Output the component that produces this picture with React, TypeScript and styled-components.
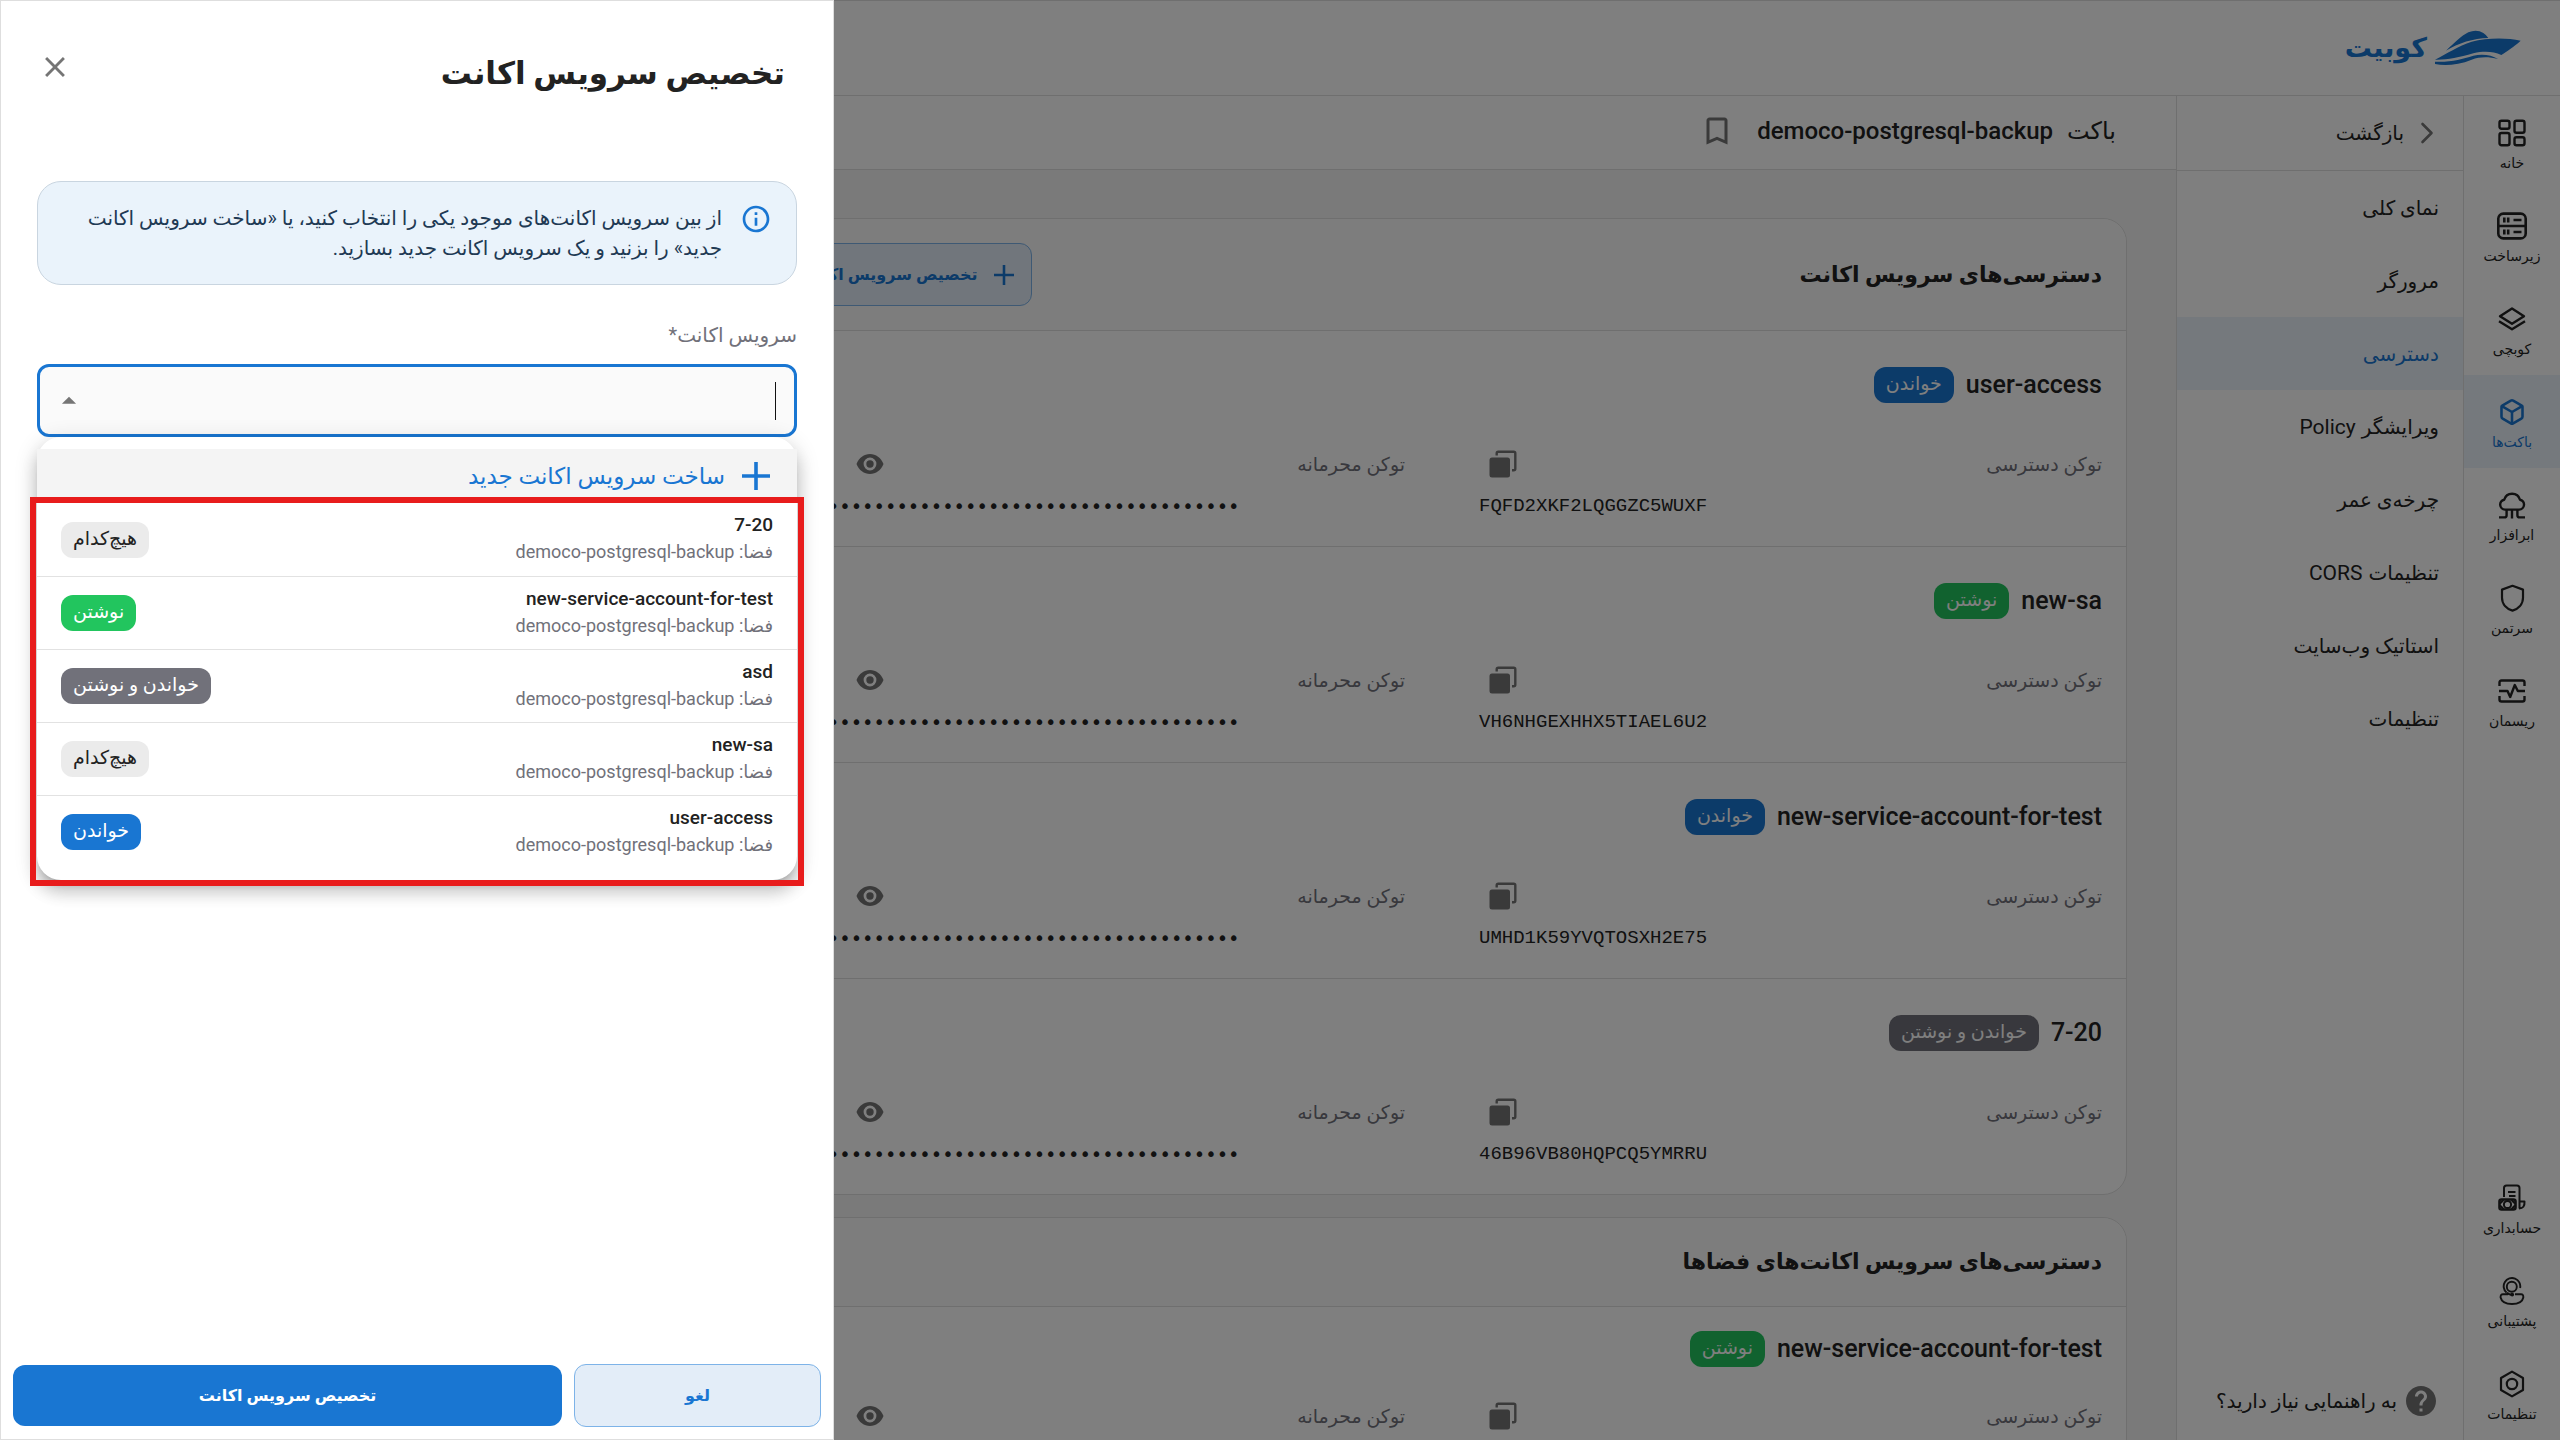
import React from "react";
import styled, { createGlobalStyle, css } from "styled-components";
import { MdBookmarkBorder, MdClose, MdHelp, MdInfoOutline, MdArrowDropUp } from "react-icons/md";
import { Box as BoxIcon } from "lucide-react";

const c = {
  blue: "#1976d2",
  green: "#22c55e",
  slate: "#71717a",
  ink: "#222222",
  muted: "#71717a",
  icon: "#757575",
  line: "#dedede",
  active: "#ebf3fa",
};

const GlobalStyle = createGlobalStyle`
  *, *::before, *::after { box-sizing: border-box; }
  html, body, #root { height: 100%; }
  body {
    margin: 0;
    direction: rtl;
    overflow: hidden;
    background: #f5f5f5;
    color: ${c.ink};
    font-family: Roboto, "DejaVu Sans", sans-serif;
    font-size: 20px;
  }
  button, input { font: inherit; color: inherit; }
  h1, h2, h3, p, ul { margin: 0; padding: 0; }
  ul { list-style: none; }
  a { color: inherit; text-decoration: none; }
  svg { display: block; flex: none; }
`;

/* ---------- icons ---------- */

const Line = styled.svg.attrs((p) => ({
  viewBox: p.viewBox ?? "0 0 28 28",
  width: p.width ?? 28,
  height: p.height ?? 28,
  strokeWidth: p.strokeWidth ?? 2.4,
  "aria-hidden": true,
}))`
  fill: none;
  stroke: currentColor;
  stroke-linejoin: round;
`;

const HomeIcon = () => (
  <Line>
    <rect x="1.5" y="1.7" width="10" height="8" rx="2" />
    <rect x="1.5" y="14" width="10" height="12.3" rx="2" />
    <rect x="16.5" y="1.7" width="10" height="12" rx="2" />
    <rect x="16.5" y="18.2" width="10" height="8.1" rx="2" />
  </Line>
);
const ServerIcon = () => (
  <Line viewBox="0 0 30 28" width="30" strokeWidth="2.6">
    <rect x="1.3" y="1.6" width="27.4" height="24.8" rx="5" />
    <path d="M1.5 14h27M7.3 5.5v5M11.2 5.5v5M7.3 17.5v5M11.2 17.5v5M16.5 8h8M16.5 20h8" />
  </Line>
);
const LayersIcon = () => (
  <Line>
    <path d="M14 3.5 26 11.2 14 18.8 2 11.2zM1 16.2l13 8 13-8" />
  </Line>
);
const CloudIcon = () => (
  <Line>
    <path d="M7 18.6a5 5 0 0 1-.8-9.9 8.2 8.2 0 0 1 15.8 0 5 5 0 0 1-.8 9.9zM1 26.4h5.4q2.2 0 2.2-2.2v-5M27 26.4h-5.4q-2.2 0-2.2-2.2v-5M14 19v8.4" />
  </Line>
);
const ShieldIcon = () => (
  <Line strokeWidth="2.2">
    <path d="M14.5 1.8 25 5.6v8.2c0 6.4-4.6 11-10.5 12.8C8.6 24.8 4 20.2 4 13.8V5.6z" />
  </Line>
);
const MonitorIcon = () => (
  <Line>
    <path d="M1.5 9V5.5q0-2 2-2h21q2 0 2 2V9M1.5 19v3.5q0 2 2 2h21q2 0 2-2V19M1 14h8.5l2.7 6 4.6-12 3 6H27" />
  </Line>
);
const BillingIcon = () => (
  <Line strokeWidth="2">
    <path d="M6 13V4q0-2.5 2.5-2.5h10.5q2.5 0 2.5 2.5v20.5M21.5 17.5h5q.5 7-5.5 7M10 8h7.5M11 12h6.5" />
    <rect x="1.5" y="15.5" width="16" height="10" rx="2" strokeWidth="2.6" />
    <circle cx="9.5" cy="20.5" r="3.6" />
    <path d="M2 19.5l3.5-3.5M17 19.5l-3.5-3.5M2 21.5l3.5 3.5M17 21.5l-3.5 3.5" />
  </Line>
);
const SupportIcon = () => (
  <Line strokeWidth="1.9">
    <circle cx="13.8" cy="9.8" r="5" />
    <path d="M8.5 15.5a8.3 8.3 0 1 1 13.6-4.5M10 17.2H5q-2.6 0-2.4 3.3C3.5 24.5 8 27 14 27s10.5-2.5 11.3-6.5q.2-3.3-2.3-3.3h-6M9 15.5q1.500 2 5 2.500" />
    <circle cx="14.2" cy="17.6" r="1" fill="currentColor" />
  </Line>
);
const SettingsIcon = () => (
  <Line strokeWidth="2.2">
    <path d="M14 1.6 25 8v12l-11 6.4L3 20V8z" />
    <circle cx="14" cy="14" r="5.2" />
  </Line>
);
const BackIcon = () => (
  <Line viewBox="0 0 14 22" width="14" height="22" strokeWidth="2.6" strokeLinecap="round">
    <path d="m2.5 2 9 9-9 9" />
  </Line>
);
const CopyIcon = () => (
  <Line>
    <rect x="0.5" y="7.5" width="20.5" height="20" rx="2.5" fill="currentColor" stroke="none" />
    <path d="M7.7 5.5V3.2q0-1.5 1.5-1.5h15.6q1.5 0 1.5 1.5v15.6q0 1.5-1.5 1.5H23" />
  </Line>
);
const EyeIcon = () => (
  <Line>
    <path
      fill="currentColor"
      stroke="none"
      fillRule="evenodd"
      d="M.5 14C3 7.8 8 4 14 4s11 3.8 13.5 10C25 20.2 20 24 14 24S3 20.2.5 14ZM14 7.6a6.4 6.4 0 1 0 0 12.8 6.4 6.4 0 0 0 0-12.8Zm0 2.7a3.7 3.7 0 1 1 0 7.4 3.7 3.7 0 0 1 0-7.4Z"
    />
  </Line>
);
const PlusIcon = ({ size = 28 }: { size?: number }) => (
  <Line width={size} height={size} strokeWidth="3.6">
    <path d="M14 0v28M0 14h28" />
  </Line>
);
const BoatLogo = () => (
  <svg width="86" height="36" viewBox="315 63 258 108" fill={c.blue} aria-hidden="true">
    <path d="M348 125C375 100 395 80 415 70Q440 60 460 72Q468 77 475 87C430 88 385 102 348 125Z" />
    <path d="M315 152C350 135 385 110 425 98C470 86 530 85 572 95C550 115 530 127 514 138C490 128 465 125 430 133C385 146 350 153 315 152Z" />
    <path d="M315 158C365 160 395 150 430 140C455 134 485 137 504 150C475 143 450 143 425 152C385 168 345 172 315 165Z" />
  </svg>
);

/* ---------- page frame ---------- */

const Page = styled.div`
  display: flex;
  flex-direction: column;
  height: 100vh;
  overflow: hidden;
  border-top: 1px solid ${c.line};
`;
const TopBar = styled.header`
  display: flex;
  align-items: center;
  flex: none;
  height: 95px;
  padding: 0 39px;
  background: #fff;
  border-bottom: 1px solid ${c.line};
`;
const Brand = styled.a`
  display: flex;
  align-items: center;
  gap: 8px;
  color: ${c.blue};
  font-size: 27px;
  font-weight: 700;
`;
const Body = styled.div`
  display: flex;
  flex: 1;
  min-height: 0;
`;
const Rail = styled.nav`
  display: flex;
  flex-direction: column;
  justify-content: space-between;
  flex: none;
  width: 97px;
  background: #fff;
  border-left: 1px solid ${c.line};
`;
const RailItem = styled.a<{ $active?: boolean }>`
  display: flex;
  flex-direction: column;
  align-items: center;
  gap: 4px;
  height: 93px;
  padding-top: 23px;
  font-size: 14px;
  line-height: 24px;
  white-space: nowrap;
  ${(p) => p.$active && css`background: ${c.active}; color: ${c.blue};`}
`;
const Side = styled.nav`
  display: flex;
  flex-direction: column;
  flex: none;
  width: 287px;
  background: #fff;
  border-left: 1px solid ${c.line};
`;
const BackLink = styled.a`
  display: flex;
  align-items: center;
  gap: 16px;
  height: 75px;
  padding: 0 29px;
  border-bottom: 1px solid ${c.line};
  svg { color: ${c.icon}; }
`;
const SideList = styled.ul`
  flex: 1;
`;
const SideLink = styled.a<{ $active?: boolean }>`
  display: flex;
  align-items: center;
  gap: 6px;
  height: 73px;
  padding: 0 24px;
  ${(p) => p.$active && css`background: ${c.active}; color: ${c.blue};`}
`;
const Latin = styled.span`
  font-size: 21px;
`;
const HelpLink = styled.a`
  display: flex;
  align-items: center;
  gap: 6px;
  height: 78px;
  padding: 0 24px;
  svg { color: ${c.icon}; }
`;

/* ---------- bucket content ---------- */

const Main = styled.main`
  display: flex;
  flex-direction: column;
  flex: 1;
  min-width: 0;
`;
const TitleBar = styled.div`
  display: flex;
  align-items: center;
  gap: 16px;
  flex: none;
  height: 74px;
  padding: 0 60px 3px;
  background: #fff;
  border-bottom: 1px solid ${c.line};
`;
const BucketTitle = styled.h1`
  display: flex;
  align-items: center;
  gap: 14px;
  font-size: 24px;
  font-weight: 500;
`;
const BucketKind = styled.span`
  font-weight: 400;
`;
const PlainButton = styled.button`
  display: grid;
  place-items: center;
  width: 48px;
  height: 48px;
  padding: 0;
  border: 0;
  background: none;
  color: ${c.icon};
`;
const Cards = styled.div`
  display: flex;
  flex-direction: column;
  gap: 22px;
  width: 100%;
  max-width: 1468px;
  padding: 48px 49px;
`;
const Card = styled.section`
  border: 1px solid ${c.line};
  border-radius: 24px;
  background: #fff;
`;
const CardHead = styled.div`
  display: flex;
  align-items: center;
  justify-content: space-between;
  padding: 24px;
  border-bottom: 1px solid ${c.line};
  border-radius: 24px 24px 0 0;
  background: #fafafa;
`;
const CardTitle = styled.h2`
  font-size: 22px;
  line-height: 40px;
  font-weight: 700;
`;
const SoftButton = styled.button`
  display: flex;
  align-items: center;
  justify-content: center;
  gap: 16px;
  height: 63px;
  padding: 0 17px;
  border: 1px solid #7db3e8;
  border-radius: 12px;
  background: #e3edf8;
  color: ${c.blue};
  font-size: 16px;
  font-weight: 700;
`;
const Account = styled.article`
  display: flex;
  flex-direction: column;
  gap: 25px;
  padding: 24px 24px 22px;
  & + & { border-top: 1px solid ${c.line}; }
`;
const AccountHead = styled.div<{ $tall?: boolean }>`
  display: flex;
  align-items: center;
  gap: 12px;
  height: ${(p) => (p.$tall ? 60 : 36)}px;
`;
const AccountName = styled.h3`
  font-size: 25px;
  line-height: 36px;
  font-weight: 500;
`;
const tones = {
  read: [c.blue, "#fff"],
  write: [c.green, "#fff"],
  both: [c.slate, "#fff"],
  none: ["#ebebeb", c.ink],
} as const;
type Tone = keyof typeof tones;
const toneLabels: Record<Tone, string> = {
  read: "خواندن",
  write: "نوشتن",
  both: "خواندن و نوشتن",
  none: "هیچ‌کدام",
};
const Badge = styled.span<{ $tone: Tone }>`
  height: 36px;
  padding: 0 12px;
  border-radius: 12px;
  background: ${(p) => tones[p.$tone][0]};
  color: ${(p) => tones[p.$tone][1]};
  font-size: 19px;
  line-height: 34px;
  white-space: nowrap;
`;
const Tokens = styled.div`
  display: grid;
  grid-template-columns: 1fr 1fr;
  column-gap: 74px;
`;
const TokenHead = styled.div`
  display: flex;
  align-items: center;
  height: 48px;
  color: ${c.muted};
  font-size: 19px;
`;
const TokenLabel = styled.span`
  flex: 1;
`;
const SecretActions = styled.div`
  display: flex;
  gap: 16px;
`;
const TokenValue = styled.div<{ $secret?: boolean }>`
  direction: ltr;
  text-align: left;
  font-family: ${(p) => (p.$secret ? '"DejaVu Sans Mono"' : '"Liberation Mono"')}, monospace;
  font-size: 19px;
  line-height: 36px;
  white-space: nowrap;
`;

/* ---------- drawer ---------- */

const Scrim = styled.div`
  position: fixed;
  inset: 0;
  background: rgba(0, 0, 0, 0.5);
`;
const Drawer = styled.aside`
  position: fixed;
  inset: 0 auto 0 0;
  display: flex;
  flex-direction: column;
  width: 834px;
  max-width: 100%;
  background: #fff;
  border: 1px solid ${c.line};
`;
const DrawerHead = styled.div`
  display: flex;
  align-items: center;
  justify-content: space-between;
  height: 132px;
  padding: 0 48px 0 30px;
`;
const DrawerTitle = styled.h2`
  padding-top: 12px;
  font-size: 31px;
  font-weight: 700;
`;
const DrawerBody = styled.div`
  flex: 1;
  padding: 48px 36px;
`;
const Notice = styled.div`
  display: flex;
  gap: 18px;
  padding: 21px 24px;
  border: 1px solid #c9d5e0;
  border-radius: 24px;
  background: #eaf3fb;
  color: #1f3a54;
  line-height: 30px;
  svg { color: ${c.blue}; }
`;
const FieldLabel = styled.label`
  display: block;
  padding-top: 35px;
  color: ${c.muted};
  line-height: 30px;
`;
const Combo = styled.div`
  position: relative;
  margin-top: 14px;
`;
const ComboBox = styled.div`
  display: flex;
  align-items: center;
  height: 73px;
  padding: 0 18px 0 13px;
  border: 3px solid ${c.blue};
  border-radius: 12px;
  background: #fafafa;
`;
const Caret = styled.span`
  width: 1px;
  height: 38px;
  background: #111;
`;
const ComboInput = styled.input`
  flex: 1;
  min-width: 0;
  border: 0;
  outline: 0;
  background: none;
`;
const ArrowButton = styled(PlainButton)`
  width: 33px;
  height: 36px;
`;
const Menu = styled.div`
  position: absolute;
  top: 100%;
  left: 0;
  right: 0;
`;
const Paper = styled.div`
  padding: 12px 0;
  border-radius: 24px;
  background: #fff;
  box-shadow:
    0 8px 8px -5px rgba(0, 0, 0, 0.2),
    0 12px 15px 2px rgba(0, 0, 0, 0.14),
    0 5px 21px 3px rgba(0, 0, 0, 0.12);
`;
const CreateButton = styled.button`
  display: flex;
  align-items: center;
  gap: 17px;
  width: 100%;
  height: 54px;
  padding: 0 27px;
  border: 0;
  background: #f4f4f4;
  color: ${c.blue};
  font-size: 23px;
`;
const Option = styled.li`
  display: flex;
  align-items: center;
  justify-content: space-between;
  height: 73px;
  padding: 0 24px;
  & + & { border-top: 1px solid #e2e2e2; }
`;
const OptionText = styled.div`
  padding-bottom: 3px;
`;
const OptionName = styled.div`
  font-size: 19px;
  line-height: 27px;
  font-weight: 500;
`;
const OptionSpace = styled.div`
  color: ${c.muted};
  font-size: 18px;
  line-height: 27px;
`;
const Highlight = styled.div`
  position: absolute;
  inset: 60px -7px -6px;
  border: 6px solid #e81c1c;
  pointer-events: none;
`;
const DrawerFoot = styled.div`
  display: flex;
  align-items: center;
  gap: 12px;
  padding: 12px;
`;
const CancelButton = styled(SoftButton)`
  width: 247px;
`;
const SubmitButton = styled(SoftButton)`
  flex: 1;
  height: 61px;
  border: 0;
  background: ${c.blue};
  color: #fff;
`;

/* ---------- data ---------- */

type RailEntry = { label: string; icon: React.ReactNode; active?: boolean };
const railGroups: RailEntry[][] = [
  [
    { label: "خانه", icon: <HomeIcon /> },
    { label: "زیرساخت", icon: <ServerIcon /> },
    { label: "کوبچی", icon: <LayersIcon /> },
    { label: "باکت‌ها", icon: <BoxIcon size={28} strokeWidth={2.2} />, active: true },
    { label: "ابرافزار", icon: <CloudIcon /> },
    { label: "سرتمن", icon: <ShieldIcon /> },
    { label: "ریسمان", icon: <MonitorIcon /> },
  ],
  [
    { label: "حسابداری", icon: <BillingIcon /> },
    { label: "پشتیبانی", icon: <SupportIcon /> },
    { label: "تنظیمات", icon: <SettingsIcon /> },
  ],
];
const sections: { label: string; latin?: string; active?: boolean }[] = [
  { label: "نمای کلی" },
  { label: "مرورگر" },
  { label: "دسترسی", active: true },
  { label: "ویرایشگر", latin: "Policy" },
  { label: "چرخه‌ی عمر" },
  { label: "تنظیمات", latin: "CORS" },
  { label: "استاتیک وب‌سایت" },
  { label: "تنظیمات" },
];
type Acc = { name: string; tone: Tone; token: string };
const accounts: Acc[] = [
  { name: "user-access", tone: "read", token: "FQFD2XKF2LQGGZC5WUXF" },
  { name: "new-sa", tone: "write", token: "VH6NHGEXHHX5TIAEL6U2" },
  { name: "new-service-account-for-test", tone: "read", token: "UMHD1K59YVQTOSXH2E75" },
  { name: "7-20", tone: "both", token: "46B96VB80HQPCQ5YMRRU" },
];
const spaceAccounts: Acc[] = [
  { name: "new-service-account-for-test", tone: "write", token: "UMHD1K59YVQTOSXH2E75" },
];
const options: { name: string; tone: Tone }[] = [
  { name: "7-20", tone: "none" },
  { name: "new-service-account-for-test", tone: "write" },
  { name: "asd", tone: "both" },
  { name: "new-sa", tone: "none" },
  { name: "user-access", tone: "read" },
];

const AccountRow = ({ item, tall }: { item: Acc; tall?: boolean }) => (
  <Account>
    <AccountHead $tall={tall}>
      <AccountName dir="ltr">{item.name}</AccountName>
      <Badge $tone={item.tone}>{toneLabels[item.tone]}</Badge>
    </AccountHead>
    <Tokens>
      <div>
        <TokenHead>
          <TokenLabel>توکن دسترسی</TokenLabel>
          <PlainButton aria-label="کپی"><CopyIcon /></PlainButton>
        </TokenHead>
        <TokenValue>{item.token}</TokenValue>
      </div>
      <div>
        <TokenHead>
          <TokenLabel>توکن محرمانه</TokenLabel>
          <SecretActions>
            <PlainButton aria-label="نمایش"><EyeIcon /></PlainButton>
            <PlainButton aria-label="کپی"><CopyIcon /></PlainButton>
          </SecretActions>
        </TokenHead>
        <TokenValue $secret>{"•".repeat(40)}</TokenValue>
      </div>
    </Tokens>
  </Account>
);

export default function App() {
  return (
    <>
      <GlobalStyle />
      <Page>
        <TopBar>
          <Brand href="#"><BoatLogo />کوبیت</Brand>
        </TopBar>
        <Body>
          <Rail>
            {railGroups.map((group, i) => (
              <ul key={i}>
                {group.map((r) => (
                  <li key={r.label}>
                    <RailItem href="#" $active={r.active}>{r.icon}{r.label}</RailItem>
                  </li>
                ))}
              </ul>
            ))}
          </Rail>
          <Side>
            <BackLink href="#"><BackIcon />بازگشت</BackLink>
            <SideList>
              {sections.map((s, i) => (
                <li key={i}>
                  <SideLink href="#" $active={s.active}>
                    {s.label}
                    {s.latin && <Latin>{s.latin}</Latin>}
                  </SideLink>
                </li>
              ))}
            </SideList>
            <HelpLink href="#"><MdHelp size={36} />به راهنمایی نیاز دارید؟</HelpLink>
          </Side>
          <Main>
            <TitleBar>
              <BucketTitle>
                <BucketKind>باکت</BucketKind>
                <span dir="ltr">democo-postgresql-backup</span>
              </BucketTitle>
              <PlainButton aria-label="نشان کردن"><MdBookmarkBorder size={36} /></PlainButton>
            </TitleBar>
            <Cards>
              <Card>
                <CardHead>
                  <CardTitle>دسترسی‌های سرویس اکانت</CardTitle>
                  <SoftButton><PlusIcon size={20} />تخصیص سرویس اکانت</SoftButton>
                </CardHead>
                {accounts.map((a) => <AccountRow key={a.name} item={a} tall />)}
              </Card>
              <Card>
                <CardHead>
                  <CardTitle>دسترسی‌های سرویس اکانت‌های فضاها</CardTitle>
                </CardHead>
                {spaceAccounts.map((a) => <AccountRow key={a.name} item={a} />)}
              </Card>
            </Cards>
          </Main>
        </Body>
      </Page>
      <Scrim />
      <Drawer>
        <DrawerHead>
          <DrawerTitle>تخصیص سرویس اکانت</DrawerTitle>
          <PlainButton aria-label="بستن"><MdClose size={34} /></PlainButton>
        </DrawerHead>
        <DrawerBody>
          <Notice>
            <MdInfoOutline size={32} />
            <p>از بین سرویس اکانت‌های موجود یکی را انتخاب کنید، یا «ساخت سرویس اکانت جدید» را بزنید و یک سرویس اکانت جدید بسازید.</p>
          </Notice>
          <FieldLabel htmlFor="service-account">سرویس اکانت*</FieldLabel>
          <Combo>
            <ComboBox>
              <Caret />
              <ComboInput id="service-account" role="combobox" aria-expanded="true" aria-controls="account-list" />
              <ArrowButton aria-label="بستن فهرست"><MdArrowDropUp size={34} /></ArrowButton>
            </ComboBox>
            <Menu>
              <Paper>
                <CreateButton><PlusIcon />ساخت سرویس اکانت جدید</CreateButton>
                <ul id="account-list" role="listbox">
                  {options.map((o) => (
                    <Option key={o.name} role="option" aria-selected="false">
                      <OptionText>
                        <OptionName><bdi>{o.name}</bdi></OptionName>
                        <OptionSpace>فضا: <bdi>democo-postgresql-backup</bdi></OptionSpace>
                      </OptionText>
                      <Badge $tone={o.tone}>{toneLabels[o.tone]}</Badge>
                    </Option>
                  ))}
                </ul>
              </Paper>
              <Highlight />
            </Menu>
          </Combo>
        </DrawerBody>
        <DrawerFoot>
          <CancelButton>لغو</CancelButton>
          <SubmitButton>تخصیص سرویس اکانت</SubmitButton>
        </DrawerFoot>
      </Drawer>
    </>
  );
}
